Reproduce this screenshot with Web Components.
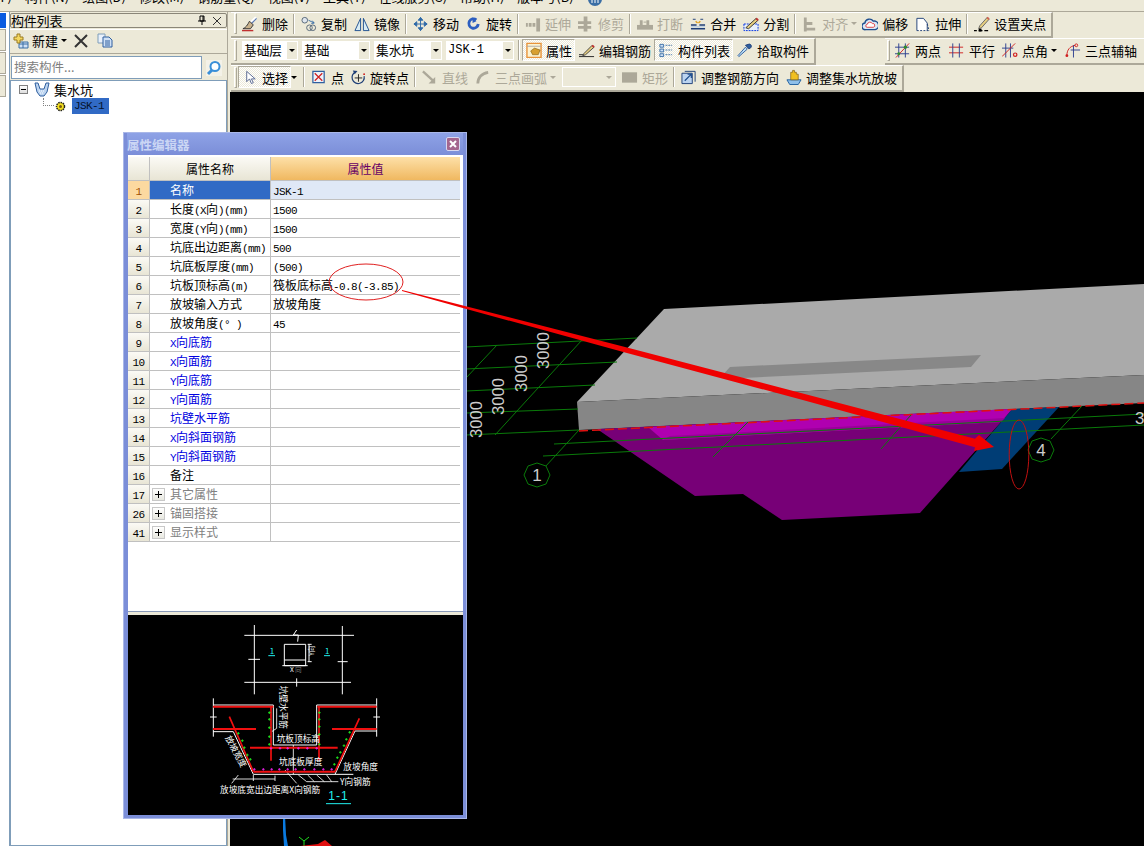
<!DOCTYPE html>
<html lang="zh">
<head>
<meta charset="utf-8">
<title>构件列表</title>
<style>
  html, body { margin: 0; height: 846px; overflow: hidden; background: #ece9d8; }
  body { font: 13px "Noto Sans CJK SC", "Liberation Sans", sans-serif; color: #000; }
</style>
</head>
<body>
<app-shell>
  <app-menubar slot="menu"></app-menubar>
  <app-sidestrip slot="strip"></app-sidestrip>
  <app-listpanel slot="panel"></app-listpanel>

  <tool-row slot="main">
    <tool-bar>
      <tool-btn icon="del" label="删除"></tool-btn><tool-sep></tool-sep>
      <tool-btn icon="copy" label="复制"></tool-btn>
      <tool-btn icon="mirror" label="镜像"></tool-btn><tool-sep></tool-sep>
      <tool-btn icon="move" label="移动"></tool-btn>
      <tool-btn icon="rotate" label="旋转"></tool-btn><tool-sep></tool-sep>
      <tool-btn icon="extend" label="延伸" disabled></tool-btn>
      <tool-btn icon="trim" label="修剪" disabled></tool-btn><tool-sep></tool-sep>
      <tool-btn icon="break" label="打断" disabled></tool-btn>
      <tool-btn icon="merge" label="合并"></tool-btn>
      <tool-btn icon="split" label="分割"></tool-btn><tool-sep></tool-sep>
      <tool-btn icon="align" label="对齐" disabled arrow></tool-btn>
      <tool-btn icon="offset" label="偏移"></tool-btn>
      <tool-btn icon="stretch" label="拉伸"></tool-btn><tool-sep></tool-sep>
      <tool-btn icon="grip" label="设置夹点"></tool-btn>
    </tool-bar>
  </tool-row>

  <tool-row slot="main">
    <tool-bar>
      <tool-combo value="基础层" width="56"></tool-combo>
      <tool-combo value="基础" width="68"></tool-combo>
      <tool-combo value="集水坑" width="68"></tool-combo>
      <tool-combo value="JSK-1" width="68"></tool-combo><tool-sep></tool-sep>
      <tool-btn icon="attrs" label="属性" pressed></tool-btn>
      <tool-btn icon="rebar" label="编辑钢筋"></tool-btn>
      <tool-btn icon="list" label="构件列表" pressed></tool-btn>
      <tool-btn icon="pick" label="拾取构件"></tool-btn>
    </tool-bar>
    <tool-bar fill>
      <tool-btn icon="twopt" label="两点" style="margin-right:1px"></tool-btn>
      <tool-btn icon="para" label="平行"></tool-btn>
      <tool-btn icon="angle" label="点角" arrow style="margin-right:3px"></tool-btn>
      <tool-btn icon="threept" label="三点辅轴"></tool-btn>
    </tool-bar>
  </tool-row>

  <tool-row slot="main">
    <tool-bar>
      <tool-btn icon="pointer" label="选择" pressed arrow style="margin-right:3px"></tool-btn><tool-sep></tool-sep>
      <tool-btn icon="point" label="点" style="margin-right:-1px"></tool-btn>
      <tool-btn icon="rotpt" label="旋转点"></tool-btn><tool-sep></tool-sep>
      <tool-btn icon="line" label="直线" disabled></tool-btn>
      <tool-btn icon="arc" label="三点画弧" disabled arrow></tool-btn>
      <tool-combo width="54" disabled></tool-combo>
      <tool-btn icon="rect" label="矩形" disabled></tool-btn><tool-sep></tool-sep>
      <tool-btn icon="adjdir" label="调整钢筋方向"></tool-btn>
      <tool-btn icon="adjslope" label="调整集水坑放坡"></tool-btn>
    </tool-bar>
  </tool-row>

  <pit-scene slot="main"></pit-scene>

  <prop-dialog slot="over" heading="属性编辑器">
    <prop-row num="1" name="名称" value="JSK-1" selected></prop-row>
    <prop-row num="2" name="长度(X向)(mm)" value="1500"></prop-row>
    <prop-row num="3" name="宽度(Y向)(mm)" value="1500"></prop-row>
    <prop-row num="4" name="坑底出边距离(mm)" value="500"></prop-row>
    <prop-row num="5" name="坑底板厚度(mm)" value="(500)"></prop-row>
    <prop-row num="6" name="坑板顶标高(m)" value="筏板底标高-0.8(-3.85)"></prop-row>
    <prop-row num="7" name="放坡输入方式" value="放坡角度"></prop-row>
    <prop-row num="8" name="放坡角度(° )" value="45"></prop-row>
    <prop-row num="9" name="X向底筋" kind="link"></prop-row>
    <prop-row num="10" name="X向面筋" kind="link"></prop-row>
    <prop-row num="11" name="Y向底筋" kind="link"></prop-row>
    <prop-row num="12" name="Y向面筋" kind="link"></prop-row>
    <prop-row num="13" name="坑壁水平筋" kind="link"></prop-row>
    <prop-row num="14" name="X向斜面钢筋" kind="link"></prop-row>
    <prop-row num="15" name="Y向斜面钢筋" kind="link"></prop-row>
    <prop-row num="16" name="备注"></prop-row>
    <prop-row num="17" name="其它属性" kind="group"></prop-row>
    <prop-row num="26" name="锚固搭接" kind="group"></prop-row>
    <prop-row num="41" name="显示样式" kind="group"></prop-row>
    <pit-detail slot="detail"></pit-detail>
  </prop-dialog>

  <pit-marks slot="over"></pit-marks>
</app-shell>

<script>
const ICONS = {
  del: '<path d="M15 1 9 7" stroke="#fff" stroke-width="3"/><path d="M15.5 2 9.5 8" stroke="#5a78b0" stroke-width="1.2"/><path d="M8 5l4 4-3 4H1c3-1 5-4 7-8z" fill="#c9b28c" stroke="#333"/><path d="M0 15h12" stroke="#c03030" stroke-width="1.5"/>',
  copy: '<circle cx="4" cy="4" r="3" fill="#dfe6ee" stroke="#567"/><circle cx="9" cy="12" r="3" fill="none" stroke="#567"/><circle cx="12.500" cy="12" r="3" fill="none" stroke="#567"/><path d="M8 4l6 3M12 4.500l2 2.500-3 .5" fill="none" stroke="#3a6ea5"/>',
  mirror: '<path d="M7 2 1 15h6zM10 2l6 13h-6z" fill="#d8ecf4" stroke="#1f4f8f"/>',
  move: '<path d="M8 1v14M1 8h14M8 1 5.500 4h5zM8 15l-2.500-3h5zM1 8l3-2.500v5zM15 8l-3-2.500v5z" fill="#2f6aa8" stroke="#2f6aa8"/>',
  rotate: '<path d="M11 3.500A5 5 0 1 0 13 8" fill="none" stroke="#2d5fc0" stroke-width="3"/><path d="M7 1v6l4-2z" fill="#2d5fc0"/>',
  extend: '<path d="M1 7h2v4H1zM4 7h3v4H4zM8 7h3v4H8z" fill="#aca899"/><path d="M12 2h4v14h-4z" fill="#aca899"/>',
  trim: '<path d="M0 5h14v3H0zM0 10h14v3H0z" fill="#aca899"/><path d="M6 0h4v16H6z" fill="#aca899"/>',
  break: '<path d="M0 9h17v5H0z" fill="#aca899"/><path d="M3 4h3v5H3zM10 4h3v5h-3z" fill="#aca899"/><path d="M7 6h3" stroke="#aca899"/>',
  merge: '<path d="M1 9h6M10 9h6M1 13h15" stroke="#1f3f77" stroke-width="1.500"/><path d="M3 3h3M11 3h3" stroke="#1f3f77"/><path d="M6 5 8 7M11 5 9 7" stroke="#e0a020" stroke-width="1.500"/><path d="M1 11h15" stroke="#a9c4e8"/>',
  split: '<path d="M1 8h15v7H1z" fill="#e8f0fb" stroke="#0030e0" stroke-dasharray="2 1"/><path d="M3 12 14 2l2 2L6 13z" fill="#e8d080" stroke="#333"/><path d="M14 2l2 2" stroke="#c03030" stroke-width="2"/>',
  align: '<path d="M2 1h3v15H2zM5 6h6v3H5zM5 12h9v3H5z" fill="#aca899"/>',
  offset: '<path d="M4 14a3.500 3.500 0 0 1-1-7 5 5 0 0 1 9-2 4 4 0 0 1 2 9z" fill="#dbe8f5" stroke="#1f4f8f" stroke-width="1.500"/><path d="M5.500 11.500a1.500 1.500 0 0 1 0-3 3 3 0 0 1 5.500-1 2 2 0 0 1 1 4z" fill="#fff" stroke="#e04040"/>',
  stretch: '<path d="M2 15V2h7l4 5v8" fill="#fff" stroke="#1f3f77"/><path d="M2 15h13M13 8l2 7" fill="none" stroke="#1f3f77" stroke-dasharray="2 1.500"/>',
  grip: '<path d="M6 10 14 1l2 2-8 9-3 1z" fill="#e8d080" stroke="#666"/><path d="M14 1l2 2" stroke="#d06050" stroke-width="2"/><path d="M0 15h3M5 15h4M11 15h4" stroke="#000" stroke-width="1.500"/><path d="M5 13h3v3H5z"/>',
  attrs: '<path d="M1 1h15v15H1z" fill="#fdf3d0" stroke="#e8943a" stroke-width="1.500"/><path d="M1 4h15" stroke="#aaa"/><path d="M5 9l4-3 6 2-2 5H7z" fill="#d8a030" stroke="#7a5a10" stroke-width=".6"/>',
  rebar: '<path d="M0 13h6M0 15h16" stroke="#222"/><path d="M5 12 14 3l2 2-9 8-3 1z" fill="#e8d080" stroke="#444"/><path d="M14 3l2 2" stroke="#c03030" stroke-width="2"/>',
  list: '<path d="M2 2h4v3H2zM2 7h4v3H2zM2 12h4v3H2z" fill="#cfe0f5" stroke="#3a6ea5"/><path d="M8 3h7M8 8h7M8 13h7" stroke="#3a6ea5" stroke-dasharray="2 1"/>',
  pick: '<path d="M2 15 1 14 9 5l2 2z" fill="#bfe0f7" stroke="#2f5f9f"/><path d="M9 3l4 4 2-2c1-2-1-4-3-3z" fill="#2f5f9f" stroke="#1f3f77"/>',
  twopt: '<path d="M0 5h15M0 12h15M4 1v15M11 1v15" stroke="#2d3f8f"/><path d="M1 16 15 1" stroke="#d02020"/><circle cx="11" cy="5" r="1.800" fill="#2e8b2e"/><circle cx="4" cy="12" r="1.500" fill="#2e8b2e"/>',
  para: '<path d="M0 5h15M0 11h15" stroke="#d02020"/><path d="M4 1v15M11 1v15" stroke="#2d3f8f"/>',
  angle: '<path d="M0 6h12M4 1v15M9 1v15" stroke="#2d3f8f"/><path d="M0 15 14 1" stroke="#d02020"/><circle cx="14" cy="13" r="1.800" fill="none" stroke="#d02020" stroke-width="1.300"/>',
  threept: '<path d="M2 14C2 8 5 4 11 3" fill="none" stroke="#d02020"/><circle cx="2" cy="14" r="1.500" fill="#d02020"/><circle cx="12" cy="3" r="1.500" fill="none" stroke="#d02020"/><path d="M6 8h10M9 3v13" stroke="#2d3f8f"/>',
  pointer: '<path d="M5 2v11l3-3 2 5 2-1-2-4h4z" fill="#fff" stroke="#55658f"/>',
  point: '<path d="M2 2h12v12H2z" fill="#eef3fb" stroke="#2f5f9f" stroke-width="1.300"/><path d="M4 4l8 8M12 4l-8 8" stroke="#d02020" stroke-width="1.300"/>',
  rotpt: '<path d="M6 2.500A6.500 6.500 0 1 0 15 7" fill="none" stroke="#1f3f77" stroke-width="1.300"/><path d="M3 1l5 .5-3 3.500z" fill="#1f3f77"/><path d="M9 5v8M5 9h8" stroke="#222"/><circle cx="15" cy="5" r="1" fill="#d02020"/>',
  line: '<path d="M1 2l11 10" stroke="#aca899" stroke-width="2.500"/><path d="M14 15h-7l7-7z" fill="#aca899"/>',
  arc: '<path d="M3 15C3 9 7 4 14 3" fill="none" stroke="#aca899" stroke-width="3"/>',
  rect: '<path d="M0 3h16v11H0z" fill="#aca899"/>',
  adjdir: '<path d="M1 4h11v11H1z" fill="#bcd4f0" stroke="#1f3f77"/><path d="M4 2h11v11" fill="none" stroke="#1f3f77"/><path d="M4 12 11 5M7 5h4v4" fill="none" stroke="#1f4f8f" stroke-width="1.300"/>',
  adjslope: '<path d="M1 11h15l-3 5H4z" fill="#8fc0ea" stroke="#1f5f9f"/><path d="M5 11V3h2v-2h2v2h2v2h2v6z" fill="#f0c020" stroke="#7a5a10" stroke-width=".7"/>'
}

class AppShell extends HTMLElement {
  constructor() {
    super()
    this.attachShadow({ mode: 'open' })
    this.shadowRoot.innerHTML = `
      <style>
        :host { display: grid; position: relative; width: 1144px; height: 846px; overflow: hidden;
          grid-template-rows: 12px 1fr; grid-template-columns: 10px 217px 3px 1fr; background: #ece9d8; }
        .top { grid-column: 1 / -1; }
        .main { grid-column: 4; display: flex; flex-direction: column; min-height: 0; }
        .panel { display: flex; min-height: 0; }
        .strip { display: flex; min-height: 0; }
        .rule { background: #ece9d8; border-left: 1px solid #aca899; box-sizing: border-box; }
      </style>
      <div class="top"><slot name="menu"></slot></div>
      <div class="strip"><slot name="strip"></slot></div>
      <div class="panel"><slot name="panel"></slot></div>
      <div class="rule"></div>
      <div class="main"><slot name="main"></slot></div>
      <slot name="over"></slot>
    `
  }
}

class AppMenubar extends HTMLElement {
  constructor() {
    super()
    this.attachShadow({ mode: 'open' })
    const items = ['文件(F)', '构件(N)', '绘图(D)', '修改(M)', '钢筋量(Q)', '视图(V)', '工具(T)', '在线服务(S)', '帮助(H)', '版本号(B)']
    this.shadowRoot.innerHTML = `
      <style>
        :host { display: block; height: 12px; box-sizing: border-box; overflow: hidden; border-bottom: 1px solid #aca899; }
        .items { display: flex; gap: 13px; margin: -14px 0 0 -30px; align-items: center; height: 20px; white-space: nowrap; }
        svg { margin: 6px 0 0 0; }
      </style>
      <div class="items">
        ${items.map(t => `<span>${t}</span>`).join('')}
        <svg width="16" height="16" viewBox="0 0 16 16"><circle cx="8" cy="8" r="7" fill="#3a6ea5"/><path d="M5 4v8M8 4v8M11 4v8" stroke="#fff"/></svg>
      </div>
    `
  }
}

class AppSidestrip extends HTMLElement {
  constructor() {
    super()
    this.attachShadow({ mode: 'open' })
    this.shadowRoot.innerHTML = `
      <style>
        :host { display: flex; flex-direction: column; width: 10px; background: #fff; border-right: 1px solid #7f9db9; box-sizing: border-box; }
        .blue { height: 15px; width: 6px; margin-top: 1px; background: #0a5be0; }
        .tab { height: 22px; width: 6px; margin-top: 1px; background: #ece9d8; border: 1px solid #aca899; border-left: 0; box-sizing: border-box; }
      </style>
      <div class="blue"></div>
      <div class="tab"></div><div class="tab"></div><div class="tab"></div>
    `
  }
}

class AppListpanel extends HTMLElement {
  constructor() {
    super()
    this.attachShadow({ mode: 'open' })
    this.shadowRoot.innerHTML = `
      <style>
        :host { display: flex; flex-direction: column; width: 217px; padding-top: 1px; box-sizing: border-box; }
        .title { display: flex; align-items: center; height: 15px; box-sizing: border-box; border: 1px solid #8a8678; border-radius: 2px;
          line-height: 13px; padding-right: 4px; }
        .title span { flex: 1; letter-spacing: -.2px; }
        .title svg { margin-left: 5px; }
        .bar { display: flex; align-items: center; height: 25px; box-sizing: border-box; padding: 0 0 2px 3px; margin-top: 1px; border-top: 1px solid #fff; border-bottom: 1px solid #aca899; }
        .bar b { font-weight: 400; margin: 0 3px 0 3px; }
        .caret { width: 0; height: 0; border: 3px solid transparent; border-top: 3px solid #000; margin-top: 3px; }
        .bar svg.x { margin-left: 7px; }
        .bar svg.c { margin-left: 9px; }
        .search { display: flex; align-items: center; height: 26px; box-sizing: border-box; padding: 1px 0 0 1px; }
        .search i { font-style: normal; display: block; width: 191px; height: 23px; line-height: 20px; box-sizing: border-box;
          border: 1px solid #7f9db9; background: #fff; color: #808080; padding-left: 2px; font-size: 12.500px; }
        .search svg { margin-left: 4px; }
        .tree { flex: 1; background: #fff; border: 1px solid #7f9db9; padding: 0 0 0 8px; }
        .node { display: flex; align-items: center; height: 16px; }
        .pm { width: 9px; height: 9px; box-sizing: border-box; border: 1px solid #808080; background: linear-gradient(#fff, #ddd); display: flex; align-items: center; justify-content: center; }
        .pm::before { content: ""; width: 5px; height: 1px; background: #000; }
        .node svg { margin: 0 4px 0 6px; }
        .child { margin: 1px 0 0 24px; height: 16px; }
        .dots { width: 10px; height: 7px; margin-top: -8px; border-left: 1px dotted #808080; border-bottom: 1px dotted #808080; }
        .child svg { margin: 0 6px 0 1px; }
        .sel { display: block; width: 37px; height: 16px; background: #316ac5; padding-left: 2px; box-sizing: border-box;
          font: 11px/16px "Liberation Mono", monospace; letter-spacing: -.6px; color: #06122a; }
      </style>
      <div class="title">
        <span>构件列表</span>
        <svg width="10" height="11" viewBox="0 0 10 11"><path d="M3 1h4v5H3zM1 6h8M5 6v4M6 1v5" fill="none" stroke="#000"/></svg>
        <svg width="10" height="10" viewBox="0 0 10 10"><path d="M1 1l8 8M9 1 1 9" stroke="#333"/></svg>
      </div>
      <div class="bar">
        <svg width="16" height="16" viewBox="0 0 16 16"><path d="M6 9h9v6H6z" fill="#cfe0f5" stroke="#3a6ea5"/><path d="M6 11h9M10 9v6" stroke="#3a6ea5"/><path d="M4 1h3v3h3v3H7v3H4V7H1V4h3z" fill="#f4d860" stroke="#9a7a20"/></svg>
        <b>新建</b><span class="caret"></span>
        <svg class="x" width="14" height="14" viewBox="0 0 14 14"><path d="M1 1l12 12M13 1 1 13" stroke="#333" stroke-width="2"/></svg>
        <svg class="c" width="16" height="15" viewBox="0 0 16 15"><path d="M1 1h7v9H1z" fill="#e8f0fb" stroke="#7f9db9"/><path d="M6 4h6l3 3v7H6z" fill="#cfe0f5" stroke="#2f5f9f"/><path d="M8 8h5M8 10h5M8 12h5" stroke="#2f5f9f"/></svg>
      </div>
      <div class="search">
        <i>搜索构件...</i>
        <svg width="16" height="16" viewBox="0 0 16 16"><path d="M0 0h16v16H0z" fill="#f4f2e8"/><circle cx="9" cy="6.500" r="4.500" fill="#fff" stroke="#3a8fd8" stroke-width="2"/><path d="M6 10l-4 4" stroke="#3a8fd8" stroke-width="3"/></svg>
      </div>
      <div class="tree">
        <div class="node">
          <span class="pm"></span>
          <svg width="16" height="16" viewBox="0 0 16 16"><path d="M1 2h3l2 6h4l2-6h3l-2 9-3 4H6l-3-4z" fill="#bcd4f0" stroke="#2f5f9f"/><path d="M5 10h6M6 12h4" stroke="#fff" stroke-dasharray="1 1"/></svg>
          <span>集水坑</span>
        </div>
        <div class="node child">
          <span class="dots"></span>
          <svg width="11" height="11" viewBox="0 0 11 11"><circle cx="5.500" cy="5.500" r="4" fill="#f4e020" stroke="#222" stroke-dasharray="1.500 .8" stroke-width="1.500"/><circle cx="5.500" cy="5.500" r="1.500" fill="#7a5a10"/></svg>
          <span class="sel">JSK-1</span>
        </div>
      </div>
    `
  }
}

class ToolRow extends HTMLElement {
  constructor() {
    super()
    this.attachShadow({ mode: 'open' })
    this.shadowRoot.innerHTML = `
      <style>
        :host { display: flex; height: 27px; flex: none; justify-content: space-between; }
        :host(:first-of-type) { height: 26px; }
      </style>
      <slot></slot>
    `
  }
}

class ToolBar extends HTMLElement {
  constructor() {
    super()
    this.attachShadow({ mode: 'open' })
    this.shadowRoot.innerHTML = `
      <style>
        :host { display: flex; align-items: center; box-sizing: border-box; padding: 0 2px 2px 3px; margin-left: 1px;
          border-top: 1px solid #fff; border-right: 2px solid #aca899; border-bottom: 2px solid #aca899; }
        :host([fill]) { width: 259px; border-right: 0; padding-left: 2px; }
        .grip { width: 1px; height: 19px; margin-right: 1px; border: 1px solid; border-color: #fff #aca899 #aca899 #fff; flex: none; }
      </style>
      <span class="grip"></span>
      <slot></slot>
    `
  }
}

class ToolSep extends HTMLElement {
  constructor() {
    super()
    this.attachShadow({ mode: 'open' })
    this.shadowRoot.innerHTML = `
      <style>
        :host { display: block; width: 1px; height: 20px; margin: 0 2px; background: #aca899; border-right: 1px solid #fff; flex: none; }
      </style>
    `
  }
}

class ToolBtn extends HTMLElement {
  constructor() {
    super()
    this.attachShadow({ mode: 'open' })
    const arrow = this.hasAttribute('arrow') ? '<span class="arrow"></span>' : ''
    this.shadowRoot.innerHTML = `
      <style>
        :host { display: flex; align-items: center; flex: none; font-size: 13px; white-space: nowrap; }
        :host([disabled]) { color: #aca899; }
        .face { display: flex; align-items: center; gap: 4px; height: 22px; box-sizing: border-box; padding: 0 4px; }
        .face b { font-weight: 400; margin-right: -1px; }
        :host([pressed]) .face { background: repeating-conic-gradient(#fff 0 25%, #ece9d8 0 50%) 0 0 / 2px 2px;
          border: 1px solid; border-color: #aca899 #fff #fff #aca899; padding: 0 3px; }
        svg { flex: none; }
        .arrow { width: 0; height: 0; border: 3px solid transparent; border-top: 3px solid currentColor; margin: 3px 1px 0 0; }
      </style>
      <span class="face">
        <svg width="16" height="16" viewBox="0 0 17 16">${ICONS[this.getAttribute('icon')] || ''}</svg>
        <b>${this.getAttribute('label')}</b>
      </span>${arrow}
    `
  }
}

class ToolCombo extends HTMLElement {
  constructor() {
    super()
    this.attachShadow({ mode: 'open' })
    const value = this.getAttribute('value') || ''
    const latin = /^[\x20-\x7e]+$/.test(value)
    this.shadowRoot.innerHTML = `
      <style>
        :host { display: flex; align-items: stretch; height: 19px; width: ${this.getAttribute('width')}px; margin: 0 2px; background: #fff; flex: none; box-sizing: border-box; font-size: 12.700px; }
        :host(:first-of-type) { margin-left: 4px; }
        :host([disabled]) { background: #ece9d8; border: 1px solid #fff; height: 20px; margin: 0 2px 0 5px; }
        .v { flex: 1; padding-left: 2px; line-height: 18px; white-space: nowrap; overflow: hidden; }
        .v.l { font: 12px/18px "Liberation Mono", monospace; }
        .b { width: 10px; margin: 1px 1px 1px 0; background: #ece9d8; display: flex; align-items: center; justify-content: center; }
        .b::after { content: ""; width: 0; height: 0; border: 3px solid transparent; border-top: 3px solid #000; margin-top: 3px; }
        :host([disabled]) .b::after { border-top-color: #aca899; }
      </style>
      <span class="v ${latin ? 'l' : ''}">${value}</span><span class="b"></span>
    `
  }
}

class PitScene extends HTMLElement {
  constructor() {
    super()
    this.attachShadow({ mode: 'open' })
    const green = [
      '466,347 637,338', '466,369 617,362', '466,391 595,385', '466,413 578,409', '466,435 579,430',
      '554,444 1144,414', '543,456 1144,425', '497,345 466,378', '582,340 495,435', '579,430 545,467',
      '748,422 713,457', '911,415 881,449', '1082,406 1051,439'
    ]
    const nums = [[476, 438], [498, 415], [521, 392], [543, 369]]
    this.shadowRoot.innerHTML = `
      <style>
        :host { display: block; flex: 1; min-height: 0; background: #000; overflow: hidden; }
        svg { display: block; }
        text { font-family: "Liberation Sans", sans-serif; fill: #ccc; }
      </style>
      <svg width="914" height="754" viewBox="230 92 914 754">
        <path d="M664 309 1144 284V375L577 402z" fill="#aaa"/>
        <path d="M730 367 981 355 971 367 743 378 720 378z" fill="#888"/>
        <path d="M577 402 1144 375V403L579 430z" fill="#868686"/>
        <path d="M1012 409 1059 407 1002 469 959 472z" fill="#003d75"/>
        <path d="M597 429 1012 409 1001 422 920 513 782 520 743 494 695 496z" fill="#770077"/>
        <path d="M648 427 1012 409 1001 422 663 440z" fill="#b000b0"/>
        <path d="M670 436 1005 418 1001 422 663 440z" fill="#990099"/>
        <path d="M579 431 1144 403" stroke="#e01010" stroke-width="1.500" stroke-dasharray="9 4"/>
        ${green.map(l => { const [a, b] = l.split(' '); const [x1, y1] = a.split(','); const [x2, y2] = b.split(','); return `<line x1="${x1}" y1="${y1}" x2="${x2}" y2="${y2}" stroke="#0a7a0a"/>` }).join('')}
        <polygon points="537,463 546,466 550,475 546,484 537,487 528,484 524,475 528,466" fill="#000" stroke="#0a7a0a"/>
        <polygon points="1041,438 1050,441 1054,450 1050,459 1041,462 1032,459 1028,450 1032,441" fill="#000" stroke="#0a7a0a"/>
        <text x="537" y="481" font-size="17" text-anchor="middle">1</text>
        <text x="1041" y="456" font-size="17" text-anchor="middle">4</text>
        <text x="1135" y="424" font-size="17">3</text>
        ${nums.map(([x, y]) => `<text transform="translate(${x + 6},${y}) rotate(-90)" font-size="17" textLength="37" lengthAdjust="spacingAndGlyphs">3000</text>`).join('')}
        <path d="M283 815 285 815 286 835 288 846 284 846 283 830z" fill="#0a7ae0"/>
        <path d="M304 846V841L299 837M304 841 309 837" fill="none" stroke="#20e020"/>
        <path d="M300 846 318 844 325 840 332 846z" fill="#e01010"/>
      </svg>
    `
  }
}

class PropDialog extends HTMLElement {
  constructor() {
    super()
    this.attachShadow({ mode: 'open' })
    this.shadowRoot.innerHTML = `
      <style>
        :host { position: absolute; left: 123px; top: 132px; width: 344px; height: 687px; box-sizing: border-box;
          background: #7b8ed8; border: 1px solid #a9b7e8; display: flex; flex-direction: column; padding: 0 3px 3px 3px; }
        .title { display: flex; align-items: center; justify-content: space-between; height: 22px; flex: none; padding: 0 3px 0 0;
          background: linear-gradient(#8ea2e6, #7b8ed8); }
        .title b { color: #cbd6f4; font-size: 12.500px; }
        .close { width: 14px; height: 14px; box-sizing: border-box; border: 1px solid #d8d8f0; background: #a4668e; display: flex; align-items: center; justify-content: center; border-radius: 2px; }
        .body { flex: 1; min-height: 0; display: flex; flex-direction: column; background: #fff; margin-left: 1px; }
        .table { padding-top: 2px; flex: 1; width: 333px; }
        .head { display: grid; grid-template-columns: 21px 120px 189px; gap: 1px; height: 24px; box-sizing: border-box; background: #c0c0c0; padding: 0 1px 1px 0; width: 332px; }
        .head span { display: flex; align-items: center; justify-content: center; font-size: 12px; background: linear-gradient(#fbfaf5, #e8e5d5); }
        .head .v { background: linear-gradient(#fde0a8, #f0b860); color: #660066; }
        .split { height: 4px; box-sizing: border-box; flex: none; background: #ece9d8; border-top: 1px solid #8a9ab8; }
        .pic { height: 200px; flex: none; }
      </style>
      <div class="title"><b>${this.getAttribute('heading')}</b>
        <span class="close"><svg width="8" height="8" viewBox="0 0 8 8"><path d="M1 1l6 6M7 1 1 7" stroke="#fff" stroke-width="2"/></svg></span>
      </div>
      <div class="body">
        <div class="table">
          <div class="head"><span></span><span>属性名称</span><span class="v">属性值</span></div>
          <slot></slot>
        </div>
        <div class="split"></div>
        <div class="pic"><slot name="detail"></slot></div>
      </div>
    `
  }
}

class PropRow extends HTMLElement {
  constructor() {
    super()
    this.attachShadow({ mode: 'open' })
    const wrap = s => (s || '').replace(/[\x20-\x7e°]+/g, m => `<span class="l">${m}</span>`)
    const group = this.getAttribute('kind') === 'group' ? '<i class="plus"></i>' : ''
    this.shadowRoot.innerHTML = `
      <style>
        :host { display: grid; grid-template-columns: 21px 120px 189px; grid-template-rows: 18px; column-gap: 1px; width: 332px; height: 19px; box-sizing: border-box;
          padding: 0 1px 1px 0; background: #c0c0c0; font-size: 12px; line-height: 18px; }
        .n { background: linear-gradient(#fbfaf5, #e8e5d5); text-align: center; }
        .c { background: #fff; position: relative; white-space: pre; }
        .name { padding-left: 20px; }
        .val { padding-left: 2px; }
        .l { font: 11px/18px "Liberation Mono", monospace; letter-spacing: -.6px; }
        :host([selected]) .n { background: #fcd9a0; color: #a05000; }
        :host([selected]) .name { background: #316ac5; color: #fff; }
        :host([selected]) .val { background: #dfe8f6; }
        :host([kind=link]) .name { color: #0000e0; }
        :host([kind=group]) .name { color: #808080; }
        .plus { position: absolute; left: 2px; top: 3px; width: 13px; height: 13px; box-sizing: border-box; border: 1px solid #c8c8c8; background: linear-gradient(#fff, #e8e8e0); }
        .plus::before { content: ""; position: absolute; left: 2px; top: 5px; width: 7px; height: 1px; background: #000; }
        .plus::after { content: ""; position: absolute; left: 5px; top: 2px; width: 1px; height: 7px; background: #000; }
      </style>
      <div class="n"><span class="l">${this.getAttribute('num')}</span></div>
      <div class="c name">${group}${wrap(this.getAttribute('name'))}</div>
      <div class="c val">${wrap(this.getAttribute('value'))}</div>
    `
  }
}

class PitDetail extends HTMLElement {
  constructor() {
    super()
    this.attachShadow({ mode: 'open' })
    const line = (d, c, w) => `<path d="${d}" fill="none" stroke="${c}" stroke-width="${w}"/>`
    const plus = (pts, c) => pts.map(([x, y]) => `<path d="M${x - 4} ${y}h8M${x} ${y - 4}v8" stroke="${c}" stroke-width="2.500"/>`).join('')
    const greens = [[433,293],[433,313],[433,338],[433,365],[433,388],[583,293],[583,313],[583,335],[583,358],[583,388],[340,355],[352,377],[358,398],[367,420],[376,433],[674,352],[664,373],[657,392],[646,412],[637,428],[628,448]]
    const pinks = [[438,400],[465,400],[488,400],[520,400],[547,400],[575,400],[388,463],[415,463],[440,463],[463,463],[488,463],[512,463],[538,463],[568,463],[595,463],[620,463]]
    this.shadowRoot.innerHTML = `
      <style>
        :host { display: block; width: 335px; height: 200px; background: #000; }
        svg { display: block; }
        text { font-family: "Noto Sans CJK SC", sans-serif; fill: #fff; font-size: 26px; }
        .cy { fill: #20f0f0; }
      </style>
      <svg width="335" height="200" viewBox="9 0 1005 600">
        ${line('M358 61H687M358 202H678M388 30V238M652 33V238M478 88H542V152H478ZM478 135H542M472 152H548M552 88V140M548 88H560M548 140H560', '#fff', 3)}
        ${line('M515 45 505 60 520 60 518 80M515 190V215M370 133H405M638 140H668', '#fff', 3)}
        ${line('M430 122H450M597 122H615', '#20f0f0', 3)}
        <text class="cy" x="434" y="118" style="font-size:24px">1</text>
        <text class="cy" x="600" y="118" style="font-size:24px">1</text>
        <text x="495" y="172" style="font-size:20px">X</text>
        <text x="510" y="172" style="font-size:20px;fill:#777">向</text>
        <text transform="translate(568,122) rotate(-90)" style="font-size:20px">Y向</text>
        ${line('M265 250V365M755 250V365M264 270H445V390H575V270H755M264 350H325L385 478H685M630 478 690 348H755M255 306H275M745 306H765', '#fff', 3)}
        ${line('M323 492H450M385 480V498M450 482V498M505 390V478M520 480 545 500M548 480 568 500M575 480 598 500M605 480 620 500M545 500H640', '#fff', 2.500)}
        ${line('M480 465 515 505M340 480 320 505M455 280V340L440 350', '#fff', 2.500)}
        ${line('M264 275H445M577 275H755M264 342H393M621 342H755M375 398H638M385 470H630', '#f01010', 6)}
        ${line('M438 275V437M582 275V437M313 305 385 470M703 310 630 470', '#f01010', 5)}
        ${plus(greens, '#20f020')}
        ${plus(pinks, '#f020f0')}
        <text transform="translate(466,212) rotate(90)">坑壁水平筋</text>
        <text x="455" y="380">坑板顶标高</text>
        <text x="462" y="451">坑底板厚度</text>
        <text x="655" y="466">放坡角度</text>
        <text x="645" y="511">Y向钢筋</text>
        <text x="285" y="534">放坡底宽出边距离X向钢筋</text>
        <text transform="translate(300,368) rotate(62)">放坡宽度</text>
        <text class="cy" x="610" y="556" textLength="58" style="font-size:36px;font-family:'Liberation Sans',sans-serif">1-1</text>
        ${line('M603 566H678', '#20f0f0', 3)}
      </svg>
    `
  }
}

class PitMarks extends HTMLElement {
  constructor() {
    super()
    this.attachShadow({ mode: 'open' })
    this.shadowRoot.innerHTML = `
      <style>
        :host { position: absolute; left: 0; top: 0; width: 1144px; height: 846px; pointer-events: none; }
        svg { display: block; }
      </style>
      <svg width="1144" height="846" viewBox="0 0 1144 846">
        <ellipse cx="366" cy="282" rx="37" ry="18" fill="none" stroke="#e02020"/>
        <path d="M402 290 460 304.800 626 347.300 800 392.700 975 438.800 979 435 994 447 974 451 975 447.200 800 399.300 626 352.700 460 307.200 402 291z" fill="#f00000"/>
        <ellipse cx="1019" cy="454.500" rx="9.800" ry="34.500" fill="none" stroke="#c01010"/>
      </svg>
    `
  }
}

customElements.define('app-shell', AppShell)
customElements.define('app-menubar', AppMenubar)
customElements.define('app-sidestrip', AppSidestrip)
customElements.define('app-listpanel', AppListpanel)
customElements.define('tool-row', ToolRow)
customElements.define('tool-bar', ToolBar)
customElements.define('tool-sep', ToolSep)
customElements.define('tool-btn', ToolBtn)
customElements.define('tool-combo', ToolCombo)
customElements.define('pit-scene', PitScene)
customElements.define('prop-dialog', PropDialog)
customElements.define('prop-row', PropRow)
customElements.define('pit-detail', PitDetail)
customElements.define('pit-marks', PitMarks)
</script>
</body>
</html>
